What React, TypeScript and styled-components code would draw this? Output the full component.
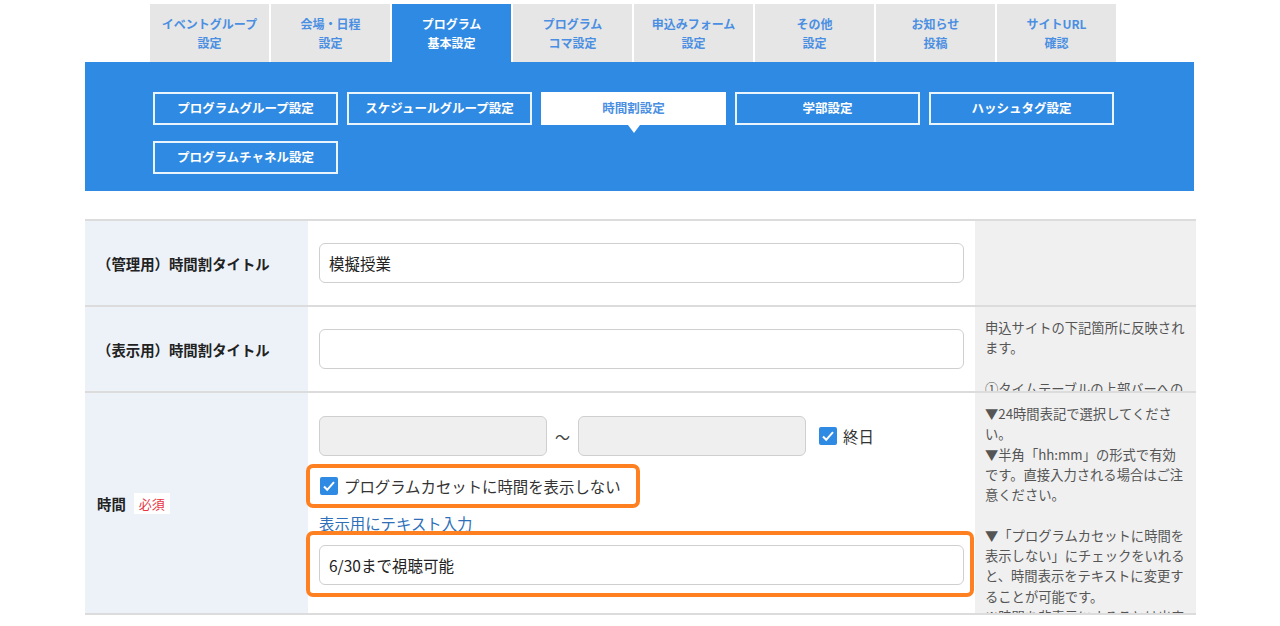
import styled, { createGlobalStyle } from "styled-components";

const GlobalStyle = createGlobalStyle`
  body {
    margin: 0;
    background: #fff;
    font-family: "Noto Sans CJK JP", "Noto Sans", sans-serif;
    color: #222;
  }
`;

const Page = styled.div`
  width: 1111px;
  margin-left: 85px;
  padding-top: 4px;
`;

const Tabs = styled.div`
  display: flex;
  gap: 2px;
  padding-left: 65px;
`;

const Tab = styled.div<{ $active?: boolean }>`
  width: 119px;
  height: 58px;
  display: flex;
  align-items: center;
  justify-content: center;
  text-align: center;
  font-size: 12px;
  font-weight: bold;
  line-height: 19px;
  background: ${(p) => (p.$active ? "#2f8ae3" : "#e6e6e6")};
  color: ${(p) => (p.$active ? "#fff" : "#4b8fe2")};
`;

const SubNav = styled.div`
  width: 1109px;
  background: #2f8ae3;
  box-sizing: border-box;
  padding: 30px 0 17px 68px;
  display: grid;
  grid-template-columns: repeat(5, 185px);
  column-gap: 9px;
  row-gap: 16px;
`;

const SubButton = styled.div<{ $active?: boolean }>`
  position: relative;
  height: 33px;
  box-sizing: border-box;
  border: 2px solid ${(p) => (p.$active ? "#fff" : "rgba(255,255,255,0.9)")};
  background: ${(p) => (p.$active ? "#fff" : "transparent")};
  color: ${(p) => (p.$active ? "#4b8fe2" : "#fff")};
  font-size: 12.5px;
  font-weight: bold;
  display: flex;
  align-items: center;
  justify-content: center;
  padding-bottom: 3px;

  ${(p) =>
    p.$active &&
    `
    &::after {
      content: "";
      position: absolute;
      left: 50%;
      bottom: -10px;
      transform: translateX(-50%);
      border-left: 6px solid transparent;
      border-right: 6px solid transparent;
      border-top: 8px solid #fff;
    }
  `}
`;

const Table = styled.div`
  margin-top: 28px;
  border-top: 2px solid #dcdcdc;
  display: grid;
  grid-template-columns: 223px 667px 221px;
`;

const Label = styled.div<{ $h: number }>`
  height: ${(p) => p.$h}px;
  background: #edf2f9;
  border-bottom: 2px solid #dcdcdc;
  display: flex;
  align-items: center;
  padding-left: 12px;
  font-size: 14.4px;
  font-weight: bold;
  gap: 8px;
`;

const Field = styled.div<{ $h: number; $top?: number }>`
  height: ${(p) => p.$h}px;
  border-bottom: 2px solid #dcdcdc;
  box-sizing: content-box;
  padding: ${(p) => (p.$top !== undefined ? `${p.$top}px 11px 0` : "0 11px")};
  box-sizing: border-box;
  height: ${(p) => p.$h + 2}px;
  display: flex;
  flex-direction: column;
  justify-content: ${(p) => (p.$top !== undefined ? "flex-start" : "center")};
`;

const Help = styled.div<{ $h: number }>`
  height: ${(p) => p.$h}px;
  background: #f0f0f0;
  border-bottom: 2px solid #dcdcdc;
  padding: 11px 10px 0 10px;
  overflow: hidden;
  font-size: 13.3px;
  line-height: 20.3px;
  color: #555;
  white-space: pre-wrap;
`;

const TextInput = styled.div<{ $width?: number; $disabled?: boolean }>`
  width: ${(p) => (p.$width ? `${p.$width}px` : "100%")};
  height: 40px;
  flex-shrink: 0;
  box-sizing: border-box;
  border: 1px solid #cfcfcf;
  border-radius: 6px;
  background: ${(p) => (p.$disabled ? "#efefef" : "#fff")};
  display: flex;
  align-items: center;
  padding: 0 9px;
  font-size: 15.5px;
  color: #222;
`;

const Badge = styled.span`
  background: #fff;
  color: #e8333f;
  font-size: 13px;
  font-weight: normal;
  padding: 1px 5px;
`;

const TimeRow = styled.div`
  display: flex;
  align-items: center;
`;

const Tilde = styled.span`
  width: 31px;
  text-align: center;
  font-size: 15px;
  color: #444;
`;

const CheckLabel = styled.label`
  display: flex;
  align-items: center;
  gap: 6px;
  font-size: 15.4px;
  color: #333;
  white-space: nowrap;
`;

const Highlight = styled.div<{ $width?: number }>`
  ${(p) => (p.$width ? `width: ${p.$width}px;` : "")}
  margin-left: -13px;
  margin-right: -10px;
  border: 4px solid #ff8020;
  border-radius: 7px;
  box-sizing: border-box;
`;

const CheckHighlight = styled(Highlight)`
  height: 44px;
  display: flex;
  align-items: center;
  margin-top: 8px;
  padding: 0 7px 0 10px;
`;

const InputHighlight = styled(Highlight)`
  padding: 10px 6px 8px 9px;
`;

const LinkText = styled.div`
  color: #2f6fb7;
  font-size: 15.4px;
  height: 23px;
  line-height: 30px;
`;

const Check = () => (
  <svg width="18" height="18" viewBox="0 0 18 18">
    <rect width="18" height="18" rx="2" fill="#2f8ae3" />
    <path d="M4 9.5l3.2 3.3L14 5.2" stroke="#fff" strokeWidth="2" fill="none" />
  </svg>
);

const tabs = [
  ["イベントグループ", "設定"],
  ["会場・日程", "設定"],
  ["プログラム", "基本設定"],
  ["プログラム", "コマ設定"],
  ["申込みフォーム", "設定"],
  ["その他", "設定"],
  ["お知らせ", "投稿"],
  ["サイトURL", "確認"],
];

const subs = [
  "プログラムグループ設定",
  "スケジュールグループ設定",
  "時間割設定",
  "学部設定",
  "ハッシュタグ設定",
  "プログラムチャネル設定",
];

export default function App() {
  return (
    <>
      <GlobalStyle />
      <Page>
        <Tabs>
          {tabs.map((t, i) => (
            <Tab key={i} $active={i === 2}>
              {t[0]}
              <br />
              {t[1]}
            </Tab>
          ))}
        </Tabs>
        <SubNav>
          {subs.map((s, i) => (
            <SubButton key={i} $active={i === 2}>
              {s}
            </SubButton>
          ))}
        </SubNav>

        <Table>
          <Label $h={84}>（管理用）時間割タイトル</Label>
          <Field $h={84}>
            <TextInput>模擬授業</TextInput>
          </Field>
          <Help $h={73} />

          <Label $h={84}>（表示用）時間割タイトル</Label>
          <Field $h={84}>
            <TextInput />
          </Field>
          <Help $h={73}>
            {"申込サイトの下記箇所に反映されます。\n\n①タイムテーブルの上部バーへの表示"}
          </Help>

          <Label $h={220}>
            時間 <Badge>必須</Badge>
          </Label>
          <Field $h={220} $top={23}>
            <TimeRow>
              <TextInput $width={228} $disabled />
              <Tilde>〜</Tilde>
              <TextInput $width={228} $disabled />
              <CheckLabel style={{ marginLeft: 13 }}>
                <Check />
                終日
              </CheckLabel>
            </TimeRow>
            <CheckHighlight $width={334}>
              <CheckLabel>
                <Check />
                プログラムカセットに時間を表示しない
              </CheckLabel>
            </CheckHighlight>
            <LinkText>表示用にテキスト入力</LinkText>
            <InputHighlight>
              <TextInput>6/30まで視聴可能</TextInput>
            </InputHighlight>
          </Field>
          <Help $h={209}>
            {
              "▼24時間表記で選択してください。\n▼半角「hh:mm」の形式で有効です。直接入力される場合はご注意ください。\n\n▼「プログラムカセットに時間を表示しない」にチェックをいれると、時間表示をテキストに変更することが可能です。\n※時間を非表示にすることは出来ません。"
            }
          </Help>
        </Table>
      </Page>
    </>
  );
}
